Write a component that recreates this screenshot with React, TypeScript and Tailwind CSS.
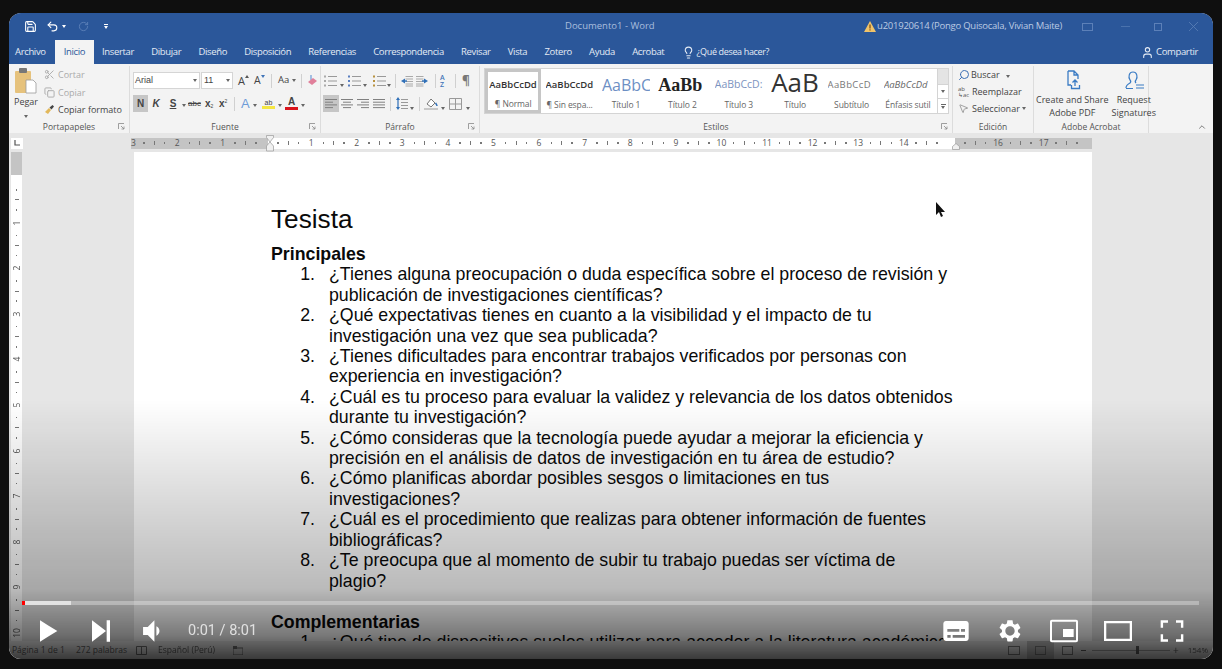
import React from "react";
import { Save, Undo2, RotateCw, Lightbulb, User, Search, Scissors, Copy, MousePointer2, ChevronUp } from "lucide-react";

const ui = { fontFamily: '"Open Sans", "Noto Sans", sans-serif' };

const Caret = ({ c = "border-t-[#666]" }: { c?: string }) => (
  <span className={`inline-block shrink-0 w-0 h-0 border-l-[2.5px] border-r-[2.5px] border-t-[3px] border-l-transparent border-r-transparent ${c}`} />
);

const Launcher = () => (
  <svg width="7" height="7" viewBox="0 0 7 7" className="text-[#888]">
    <path d="M0.5 6V0.5H6M3 3l3 3M6 3.5V6H3.5" fill="none" stroke="currentColor" strokeWidth="0.8" />
  </svg>
);

const Sep = ({ c }: { c: string }) => <span className={`w-px h-[14px] bg-[#d0d0d0] shrink-0 ${c}`} />;

const Group = ({ w, label, launcher, children }: { w: string; label: string; launcher?: boolean; children: React.ReactNode }) => (
  <div className={`${w} shrink-0 flex flex-col h-full border-r border-[#dcdcdc]`}>
    <div className="flex-1 min-h-0">{children}</div>
    <div className="h-[12px] shrink-0 flex items-center justify-center relative text-[8.5px] text-[#555] leading-none">
      {label}
      {launcher && (
        <span className="absolute right-[4px] top-[2px]">
          <Launcher />
        </span>
      )}
    </div>
  </div>
);

const Align = ({ kind }: { kind: "l" | "c" | "r" | "j" }) => {
  const rows = [1, 3.7, 6.4, 9.1];
  const widths = kind === "j" ? [12, 12, 12, 12] : [12, 8, 12, 8];
  return (
    <svg width="12" height="11" viewBox="0 0 12 11">
      {rows.map((y, i) => {
        const wd = widths[i];
        const x = kind === "c" ? (12 - wd) / 2 : kind === "r" ? 12 - wd : 0;
        return <rect key={y} x={x} y={y} width={wd} height="1" fill="#808080" />;
      })}
    </svg>
  );
};

const BulletList = ({ dot = "#555" }: { dot?: string }) => (
  <svg width="13" height="12" viewBox="0 0 13 12" className="shrink-0">
    {[1.5, 6, 10.5].map((y) => (
      <g key={y}>
        <rect x="0" y={y - 1} width="2" height="2" fill={dot} />
        <rect x="4" y={y - 0.5} width="9" height="1" fill="#999" />
      </g>
    ))}
  </svg>
);

const Indent = ({ flip }: { flip?: boolean }) => (
  <svg width="13" height="12" viewBox="0 0 13 12" className={`shrink-0 ${flip ? "-scale-x-100" : ""}`}>
    {[1, 3.5, 6, 8.5, 10.5].map((y) => (
      <rect key={y} x="5.5" y={y} width="7.5" height="1" fill="#aaa" />
    ))}
    <path d="M5 3.5L1 6l4 2.5z" fill="#2f6fb8" />
    <rect x="3.5" y="5.3" width="3.5" height="1.4" fill="#2f6fb8" />
  </svg>
);

const styles = [
  { a: "AaBbCcDd", l: "¶ Normal", cls: "text-[9.5px] text-[#333] font-semibold [font-family:'Open_Sans',sans-serif]", active: true },
  { a: "AaBbCcDd", l: "¶ Sin espa...", cls: "text-[9.5px] text-[#333] font-semibold [font-family:'Open_Sans',sans-serif]" },
  { a: "AaBbCc(", l: "Título 1", cls: "text-[16px] text-[#6d8fc4] [font-family:'Open_Sans',sans-serif]" },
  { a: "AaBb", l: "Título 2", cls: "text-[18px] text-[#222] font-bold [font-family:'Liberation_Serif',serif]" },
  { a: "AaBbCcD:", l: "Título 3", cls: "text-[10.5px] text-[#7c93c0] [font-family:'Open_Sans',sans-serif]" },
  { a: "AaB", l: "Título", cls: "text-[26px] text-[#333] leading-[18px] -translate-y-[3px] inline-block [font-family:'Open_Sans',sans-serif]" },
  { a: "AaBbCcD", l: "Subtítulo", cls: "text-[9.5px] text-[#777] tracking-[0.4px] [font-family:'Open_Sans',sans-serif]" },
  { a: "AaBbCcDd", l: "Énfasis sutil", cls: "text-[9.5px] text-[#666] italic [font-family:'Open_Sans',sans-serif]" },
];

const tabs = ["Insertar", "Dibujar", "Diseño", "Disposición", "Referencias", "Correspondencia", "Revisar", "Vista", "Zotero", "Ayuda", "Acrobat"];

const questions = [
  ["¿Tienes alguna preocupación o duda específica sobre el proceso de revisión y", "publicación de investigaciones científicas?"],
  ["¿Qué expectativas tienes en cuanto a la visibilidad y el impacto de tu", "investigación una vez que sea publicada?"],
  ["¿Tienes dificultades para encontrar trabajos verificados por personas con", "experiencia en investigación?"],
  ["¿Cuál es tu proceso para evaluar la validez y relevancia de los datos obtenidos", "durante tu investigación?"],
  ["¿Cómo consideras que la tecnología puede ayudar a mejorar la eficiencia y", "precisión en el análisis de datos de investigación en tu área de estudio?"],
  ["¿Cómo planificas abordar posibles sesgos o limitaciones en tus", "investigaciones?"],
  ["¿Cuál es el procedimiento que realizas para obtener información de fuentes", "bibliográficas?"],
  ["¿Te preocupa que al momento de subir tu trabajo puedas ser víctima de", "plagio?"],
];

const Seg = ({ n }: { n?: number }) => (
  <div className="w-[45.6px] shrink-0 flex items-center justify-between pl-[9px] text-[8.5px] leading-none text-[#555]">
    <span className="w-[1.5px] h-[1.5px] bg-[#777]" />
    <span className="w-[1px] h-[4px] bg-[#777]" />
    <span className="w-[1.5px] h-[1.5px] bg-[#777]" />
    <span className="w-[5px] flex justify-center">{n ?? ""}</span>
  </div>
);

const VSeg = ({ n }: { n: number }) => (
  <div className="h-[45.6px] shrink-0 flex flex-col items-center justify-between pt-[9px] text-[8.5px] leading-none text-[#555]">
    <span className="w-[1.5px] h-[1.5px] bg-[#777]" />
    <span className="w-[4px] h-[1px] bg-[#777]" />
    <span className="w-[1.5px] h-[1.5px] bg-[#777]" />
    <span className="h-[6px] w-[6px] flex items-center justify-center -rotate-90">{n}</span>
  </div>
);

const YtIcon = ({ children }: { children: React.ReactNode }) => (
  <svg width="48" height="48" viewBox="0 0 36 36" fill="#fff">
    {children}
  </svg>
);

const Btn = ({ children }: { children: React.ReactNode }) => (
  <div className="w-[52px] h-[48px] flex items-center justify-center shrink-0">{children}</div>
);
const RBtn = ({ children }: { children: React.ReactNode }) => (
  <div className="w-[54px] h-[48px] flex items-center justify-center shrink-0">{children}</div>
);

export default function App() {
  return (
    <div className="w-[1222px] h-[669px] bg-[#0f0f0f] pt-[13px] pl-[9px] overflow-hidden" style={ui}>
      <div className="relative w-[1204px] h-[646px] rounded-[12px] overflow-hidden bg-[#e6e6e6] flex flex-col">
        {/* Word app */}
        <div className="flex flex-col h-full blur-[0.5px]">
          {/* title bar */}
          <div className="h-[27px] shrink-0 bg-[#2b579a] flex items-center text-[10px] text-[#a9bedd]">
            <div className="flex items-center pl-[15px] gap-[9px] w-[300px]">
              <Save size={13} className="text-white" />
              <span className="flex items-center gap-[3px]">
                <Undo2 size={13} className="text-white" />
                <Caret c="border-t-white" />
              </span>
              <RotateCw size={11} className="text-[#5c80b8] ml-[3px]" />
              <span className="ml-[6px] flex flex-col items-center gap-[1px]">
                <span className="w-[4px] h-[1px] bg-white" />
                <Caret c="border-t-white" />
              </span>
            </div>
            <div className="pl-[256px] whitespace-nowrap text-[9.5px]">Documento1 - Word</div>
            <div className="ml-auto flex items-center pr-[15px]">
              <svg width="12" height="11" viewBox="0 0 12 11" className="mr-[1px]">
                <path d="M6 0L12 11H0Z" fill="#f0c36a" />
                <rect x="5.4" y="3.5" width="1.2" height="4" fill="#7a4a10" />
                <rect x="5.4" y="8.3" width="1.2" height="1.2" fill="#7a4a10" />
              </svg>
              <span className="text-[9.5px] text-[#bccbe3] whitespace-nowrap mr-[20px] tracking-[-0.25px]">u201920614 (Pongo Quisocala, Vivian Maite)</span>
              <span className="w-[11px] h-[8px] border border-[#5c80b8] mr-[28px]" />
              <span className="w-[9px] h-[1px] bg-[#4a72ad] mr-[24px]" />
              <span className="w-[8px] h-[8px] border border-[#5c80b8] mr-[27px]" />
              <svg width="9" height="9" viewBox="0 0 9 9"><path d="M0 0l9 9M9 0L0 9" stroke="#5c80b8" strokeWidth="0.8" /></svg>
            </div>
          </div>
          {/* tabs */}
          <div className="h-[24px] shrink-0 bg-[#2b579a] flex items-end text-[9.5px] text-[#e4ebf5] tracking-[-0.35px]">
            <div className="w-[46px] pl-[6px] h-[24px] flex items-center whitespace-nowrap">Archivo</div>
            <div className="w-[39px] h-[24px] bg-[#f3f3f3] text-[#2b579a] flex items-center justify-center">Inicio</div>
            <div className="flex items-center h-[24px] gap-[17.2px] pl-[8px] whitespace-nowrap">
              {tabs.map((t) => (
                <span key={t}>{t}</span>
              ))}
              <span className="flex items-center gap-[2px] text-[9px]">
                <Lightbulb size={13} />
                ¿Qué desea hacer?
              </span>
            </div>
            <div className="ml-auto h-[24px] flex items-center pr-[15px] gap-[2px] text-[9.5px]">
              <User size={13} />
              Compartir
            </div>
          </div>
          {/* ribbon */}
          <div className="h-[69px] shrink-0 bg-[#f3f3f3] flex items-stretch text-[#444] pt-[2px]">
            <Group w="w-[121px]" label="Portapapeles" launcher>
              <div className="flex h-full">
                <div className="w-[34px] flex flex-col items-center text-[9px] leading-none pt-[1px]">
                  <svg width="24" height="28" viewBox="0 0 24 28">
                    <rect x="1" y="4" width="16" height="22" rx="1" fill="#e6c27c" />
                    <rect x="5" y="1" width="8" height="5" rx="1" fill="#777" />
                    <path d="M12 13h7l3 3v10H12z" fill="#fff" stroke="#999" strokeWidth="0.8" />
                  </svg>
                  <span className="mt-[2px]">Pegar</span>
                  <span className="mt-[4px]"><Caret /></span>
                </div>
                <div className="flex flex-col text-[9px] gap-[0px] leading-[17.5px] pl-[1px]">
                  <span className="flex items-center gap-[3px] text-[#aaa]"><Scissors size={11} />Cortar</span>
                  <span className="flex items-center gap-[3px] text-[#aaa]"><Copy size={11} />Copiar</span>
                  <span className="flex items-center gap-[3px] text-[#444] whitespace-nowrap">
                    <svg width="11" height="11" viewBox="0 0 11 11"><path d="M1 8l4-4 2 2-3 4z" fill="#e2b85a" /><path d="M5.5 3.5L8.5 1l1.5 1.5-2.5 3z" fill="#444" /></svg>
                    Copiar formato
                  </span>
                </div>
              </div>
            </Group>
            <Group w="w-[191px]" label="Fuente" launcher>
              <div className="pl-[3px] pt-[6px] flex flex-col gap-[6px]">
                <div className="flex items-center h-[17px] text-[9px]">
                  <div className="w-[67px] h-[17px] shrink-0 bg-white border border-[#d5d5d5] flex items-center justify-between px-[1px] pr-[2px] [font-family:'Liberation_Sans',sans-serif]">Arial<Caret /></div>
                  <div className="w-[32px] h-[17px] shrink-0 ml-px bg-white border border-[#d5d5d5] flex items-center justify-between pl-[2px] pr-[2px] [font-family:'Liberation_Sans',sans-serif]">11<Caret /></div>
                  <span className="ml-[5px] w-[10px] text-[11px] leading-none flex items-start">A<svg width="4" height="3" viewBox="0 0 4 3" className="shrink-0"><path d="M2 0l2 3H0z" fill="#555" /></svg></span>
                  <span className="ml-[6px] w-[10px] text-[10.5px] leading-none flex items-start">A<svg width="4" height="3" viewBox="0 0 4 3" className="shrink-0"><path d="M0 0h4L2 3z" fill="#3f74b8" /></svg></span>
                  <Sep c="ml-[7px]" />
                  <span className="ml-[6px] flex items-center gap-[3px] text-[9.5px]">Aa<Caret /></span>
                  <Sep c="ml-[5px]" />
                  <span className="ml-[4px]">
                    <svg width="13" height="13" viewBox="0 0 13 13"><path d="M5 1v5" stroke="#6d9bd8" strokeWidth="1.2" /><path d="M2 8l5-4 4 3-5 4z" fill="#e07f9a" /></svg>
                  </span>
                </div>
                <div className="flex items-center h-[17px] text-[10px] font-bold [font-family:'Liberation_Sans',sans-serif] text-[#444]">
                  <span className="w-[15px] h-[17px] shrink-0 bg-[#c6c6c6] flex items-center justify-center">N</span>
                  <span className="w-[8px] ml-[4px] text-center italic">K</span>
                  <span className="w-[8px] ml-[9px] text-center underline">S</span>
                  <span className="ml-[5px]"><Caret /></span>
                  <span className="ml-[2px] w-[14px] line-through font-normal text-[8px]">abc</span>
                  <span className="ml-[3px] w-[9px] leading-none flex items-end">x<span className="text-[5px] font-normal">2</span></span>
                  <span className="ml-[5px] w-[9px] leading-none flex items-start">x<span className="text-[5px] font-normal">2</span></span>
                  <Sep c="ml-[6px]" />
                  <span className="ml-[6px] w-[10px] text-[#6d9bd8] text-[13px] font-normal leading-none">A</span>
                  <span className="ml-[2px]"><Caret /></span>
                  <span className="ml-[5px] w-[13px] flex flex-col items-center leading-none text-[7px] font-normal">ab<span className="w-[13px] h-[3px] bg-[#f5e642]" /></span>
                  <span className="ml-[3px]"><Caret /></span>
                  <span className="ml-[3px] w-[13px] flex flex-col items-center leading-none text-[10px]">A<span className="w-[13px] h-[3px] bg-[#d9141c]" /></span>
                  <span className="ml-[3px]"><Caret /></span>
                </div>
              </div>
            </Group>
            <Group w="w-[159px]" label="Párrafo" launcher>
              <div className="pt-[6px] flex flex-col gap-[6px]">
                <div className="flex items-center h-[17px]">
                  <span className="ml-[3px]"><BulletList dot="#aaa" /></span>
                  <span className="ml-[3px]"><Caret /></span>
                  <span className="ml-[4px]"><BulletList dot="#5a7fc0" /></span>
                  <span className="ml-[2px]"><Caret /></span>
                  <span className="ml-[6px]"><BulletList dot="#b8913f" /></span>
                  <span className="ml-[1px]"><Caret /></span>
                  <Sep c="ml-[4px]" />
                  <span className="ml-[4px]"><Indent /></span>
                  <span className="ml-[3px]"><Indent flip /></span>
                  <Sep c="ml-[6px]" />
                  <span className="ml-[4px] w-[11px] text-[7px] leading-[7px] text-[#3f74b8] font-semibold">A<br />Z</span>
                  <Sep c="ml-[4px]" />
                  <span className="ml-[6px] text-[12px] text-[#777] font-bold leading-none">¶</span>
                </div>
                <div className="flex items-center h-[17px]">
                  <span className="ml-[2px] w-[16px] h-[17px] bg-[#c6c6c6] flex items-center justify-center"><Align kind="l" /></span>
                  <span className="w-[16px] flex justify-center"><Align kind="c" /></span>
                  <span className="w-[16px] flex justify-center"><Align kind="r" /></span>
                  <span className="w-[16px] flex justify-center"><Align kind="j" /></span>
                  <Sep c="ml-[3px]" />
                  <svg width="12" height="13" viewBox="0 0 12 13" className="ml-[5px]"><path d="M2 0l2 3H0zM2 13l2-3H0zM1.4 3h1.2v7H1.4z" fill="#2f6fb8" /><path d="M5 2h7v1H5zM5 5h7v1H5zM5 8h7v1H5zM5 11h7v1H5z" fill="#999" /></svg>
                  <span className="ml-[2px]"><Caret /></span>
                  <Sep c="ml-[5px]" />
                  <svg width="15" height="13" viewBox="0 0 15 13" className="ml-[4px]"><path d="M3 7l4-5 4 4-4 4z" fill="#fff" stroke="#777" /><path d="M11.5 6c1 1.5 1.5 2 1.5 3" stroke="#2f6fb8" strokeWidth="1.4" fill="none" /><rect x="0" y="11" width="14" height="2" fill="#c8c8c8" /></svg>
                  <span className="ml-[2px]"><Caret /></span>
                  <svg width="13" height="12" viewBox="0 0 13 12" className="ml-[4px]"><path d="M.5.5h12v11H.5zM6.5.5v11M.5 6h12" fill="none" stroke="#999" /></svg>
                  <span className="ml-[4px]"><Caret /></span>
                </div>
              </div>
            </Group>
            <Group w="w-[473px]" label="Estilos" launcher>
              <div className="pl-[4px] pt-[2px] flex">
                <div className="w-[454px] h-[46px] flex bg-white border border-[#d4d4d4] shrink-0">
                  {styles.map((s) => (
                    <div key={s.l} className={`w-[56.4px] shrink-0 h-full flex flex-col items-center justify-between overflow-hidden ${s.active ? "border-[3px] border-[#c6c6c6] pt-[2px]" : "pt-[5px] pb-[1px]"}`}>
                      <div className="w-[48px] h-[22px] flex items-center overflow-hidden">
                        <span className={`whitespace-nowrap ${s.cls}`}>{s.a}</span>
                      </div>
                      <div className={`text-[8.5px] text-[#666] whitespace-nowrap leading-[14px] tracking-[-0.1px] ${s.active ? "translate-y-[1px]" : ""}`}>{s.l}</div>
                    </div>
                  ))}
                </div>
                <div className="w-[11px] h-[46px] flex flex-col border border-l-0 border-[#d4d4d4] items-center text-[#777]">
                  <span className="h-[15px] w-full bg-[#e4e4e4]" />
                  <span className="h-[15px] flex items-center border-y border-[#d4d4d4] w-full justify-center bg-white"><Caret /></span>
                  <span className="h-[14px] flex flex-col items-center justify-center gap-[1px] w-full bg-white"><span className="w-[5px] h-px bg-[#666]" /><Caret /></span>
                </div>
              </div>
            </Group>
            <Group w="w-[81px]" label="Edición">
              <div className="pl-[5px] flex flex-col text-[9px] leading-[17px] whitespace-nowrap">
                <span className="flex items-center gap-[1px]"><Search size={12} className="text-[#3b6fb5] -scale-x-100" />Buscar<span className="ml-[5px]"><Caret /></span></span>
                <span className="flex items-center gap-[2px]"><span className="text-[6px] leading-[6px] text-[#555] w-[12px]">ab<br />↳ac</span>Reemplazar</span>
                <span className="flex items-center gap-[2px]"><MousePointer2 size={11} className="text-[#999] mr-[1px]" />Seleccionar<Caret /></span>
              </div>
            </Group>
            <Group w="w-[115px]" label="Adobe Acrobat">
              <div className="flex text-[9px] leading-[13px] text-center pt-[4px] pl-[2px] gap-[3px] whitespace-nowrap">
                <div className="flex flex-col items-center">
                  <svg width="17" height="20" viewBox="0 0 17 20" className="mb-[3px] translate-x-[2px]"><path d="M2 1h6l4 4v4M8 1v4h4M2 1v14h3M9 10v6M6.5 12.5L9 10l2.5 2.5M5.5 15v3.5h8V15" fill="none" stroke="#3b7cc4" strokeWidth="1.3" /></svg>
                  Create and Share<br />Adobe PDF
                </div>
                <div className="flex flex-col items-center">
                  <svg width="22" height="20" viewBox="0 0 22 20" className="mb-[3px]"><path d="M3 18c0-3 2-4 4-5 1-1 1-2 0-3-2-3-1-8 3-8s5 5 3 8c-1 1-1 2 0 3" fill="none" stroke="#3b7cc4" strokeWidth="1.2" /><path d="M3 18.5h7M13 15h8M13 18h8" stroke="#3b7cc4" strokeWidth="1.2" /></svg>
                  Request<br />Signatures
                </div>
              </div>
            </Group>
            <div className="flex-1 flex items-end justify-end pr-[6px] pb-[1px]"><ChevronUp size={10} className="text-[#666]" /></div>
          </div>
          {/* ruler row */}
          <div className="h-[19px] shrink-0 flex items-center relative bg-[#e6e6e6]">
            <div className="w-[12px] h-[11px] bg-white ml-[2px] mr-[108px] mt-[1px] flex items-center justify-center">
              <svg width="6" height="6" viewBox="0 0 6 6"><path d="M1 0v5h5" fill="none" stroke="#555" strokeWidth="1.2" /></svg>
            </div>
            <div className="h-[11px] w-[137px] bg-[#c4c4c4] flex items-center mt-[1px] text-[8.5px] leading-none text-[#555]">
              <span className="w-[3px]">3</span>
              <Seg n={2} /><Seg n={1} /><Seg />
            </div>
            <div className="h-[11px] w-[687px] bg-white flex items-center mt-[1px] overflow-hidden">
              {Array.from({ length: 14 }).map((_, i) => <Seg key={i} n={i + 1} />)}
              <Seg />
            </div>
            <div className="h-[11px] w-[137px] bg-[#c4c4c4] flex items-center mt-[1px] overflow-hidden">
              <Seg n={16} /><Seg n={17} /><Seg />
            </div>
            <svg width="8" height="17" viewBox="0 0 8 17" className="absolute left-[257px] top-[2px]"><path d="M0.5 0.5h7v2L4 7 0.5 2.5zM4 7l3.5 4v5h-7v-5z" fill="#f0f0f0" stroke="#999" strokeWidth="0.7" /></svg>
            <svg width="8" height="7" viewBox="0 0 8 7" className="absolute left-[943px] top-[10px]"><path d="M4 0.5L7.5 3.5v3h-7v-3z" fill="#f0f0f0" stroke="#999" strokeWidth="0.7" /></svg>
          </div>
          {/* workspace */}
          <div className="flex-1 min-h-0 flex overflow-hidden">
            <div className="w-[125px] shrink-0 flex">
              <div className="ml-[2px] w-[11px] h-full flex flex-col items-center overflow-hidden bg-white">
                <div className="h-[23px] shrink-0 w-full bg-[#c4c4c4]" />
                <div className="mt-[5px]">
                  {Array.from({ length: 10 }).map((_, i) => <VSeg key={i} n={i + 1} />)}
                </div>
              </div>
            </div>
            <div className="w-[958px] h-full shrink-0 bg-white relative pl-[137px] pt-[52px] text-[#0a0a0a] leading-[20.4px] text-[17.75px] [font-family:'Liberation_Sans',Arial,sans-serif] whitespace-nowrap overflow-hidden">
              <div className="text-[26.2px] leading-[30px] mb-[10px]">Tesista</div>
              <div className="font-bold">Principales</div>
              {questions.map((q, i) => (
                <div key={i} className="flex">
                  <span className="w-[44px] text-right shrink-0">{i + 1}.</span>
                  <span className="pl-[14px]">{q[0]}<br />{q[1]}</span>
                </div>
              ))}
              <div className="font-bold mt-[21px]">Complementarias</div>
              <div className="flex">
                <span className="w-[44px] text-right shrink-0">1.</span>
                <span className="pl-[14px]">¿Qué tipo de dispositivos suelos utilizar para acceder a la literatura académica</span>
              </div>
              <svg width="10" height="16" viewBox="0 0 10 16" className="absolute left-[801px] top-[50px]"><path d="M1 0v13l3-3 2 5 2-1-2-4h4z" fill="#111" /></svg>
            </div>
            <div className="flex-1" />
          </div>
          {/* status */}
          <div className="h-[18px] shrink-0 bg-[#f1f1f1] flex items-center text-[8.5px] text-[#666] whitespace-nowrap">
            <span className="ml-[3px] w-[64px]">Página 1 de 1</span>
            <span className="w-[60px]">272 palabras</span>
            <svg width="11" height="9" viewBox="0 0 11 9" className="mr-[11px]"><path d="M.5.5h10v8H.5zM5.5.5v8" fill="none" stroke="#777" /></svg>
            <span className="w-[75px]">Español (Perú)</span>
            <svg width="10" height="9" viewBox="0 0 10 9"><rect y="2" width="10" height="7" fill="none" stroke="#777" /><rect width="4" height="3" fill="#777" /></svg>
            <div className="ml-auto flex items-center pr-[5px]">
              <span className="w-[12px] h-[9px] border border-[#888] mr-[7px]" />
              <span className="w-[27px] h-[18px] bg-[#c8c8c8] flex items-center justify-center"><span className="w-[11px] h-[9px] border border-[#888]" /></span>
              <span className="w-[11px] h-[9px] border border-[#888] mx-[8px]" />
              <span className="w-[5px] h-px bg-[#666]" />
              <span className="w-[78px] h-px bg-[#aaa] ml-[6px] flex justify-start pl-[44px]"><span className="w-[3px] h-[8px] bg-[#666] -mt-[4px]" /></span>
              <span className="ml-[3px] text-[10px] leading-none">+</span>
              <span className="ml-[9px] text-[8px]">154%</span>
            </div>
          </div>
        </div>

        {/* Player gradient */}
        <div className="absolute inset-x-0 bottom-0 h-[259px] pointer-events-none bg-[linear-gradient(to_bottom,rgba(0,0,0,0)_0%,rgba(0,0,0,0.27)_73%,rgba(0,0,0,0.53)_91%,rgba(0,0,0,0.76)_100%)]" />

        {/* Player controls */}
        <div className="absolute left-[13px] right-[14px] bottom-0 h-[58px] text-white">
          <div className="h-[4px] w-full bg-white/30 flex">
            <div className="w-[3px] h-full bg-[#ff0000]" />
            <div className="w-[46px] h-full bg-white/60" />
          </div>
          <div className="flex items-center h-[48px] mt-[2px] [font-family:'Roboto',sans-serif]">
            <Btn>
              <YtIcon><path d="M12,26 18.5,22 18.5,14 12,10 z M18.5,22 25,18 25,18 18.5,14 z" /></YtIcon>
            </Btn>
            <Btn>
              <YtIcon><path d="M12,26 L22.5,18 L12,10 Z M23,10 H25.5 V26 H23 Z" /></YtIcon>
            </Btn>
            <Btn>
              <YtIcon><path d="M11.3,21 L14.8,21 L19.8,26 L19.8,10 L14.8,15 L11.3,15 Z M21.3,14.5 L21.3,21.5 C22.6,20.9 23.6,19.6 23.6,18 C23.6,16.4 22.6,15.1 21.3,14.5 Z" /></YtIcon>
            </Btn>
            <span className="ml-[10px] text-[14.5px] text-white/75 whitespace-nowrap leading-none">0:01 / 8:01</span>
            <div className="ml-auto flex items-center">
              <RBtn>
                <YtIcon><path fillRule="evenodd" d="M10.5,10.5 H25.5 C26.6,10.5 27.5,11.4 27.5,12.5 V23.5 C27.5,24.6 26.6,25.5 25.5,25.5 H10.5 C9.4,25.5 8.5,24.6 8.5,23.5 V12.5 C8.5,11.4 9.4,10.5 10.5,10.5 Z M11.5,16.5 V18.5 H20.5 V16.5 Z M21.75,16.5 V18.5 H24.75 V16.5 Z M11.5,21 V23 H14 V21 Z M15.5,21 V23 H24.75 V21 Z" /></YtIcon>
              </RBtn>
              <RBtn>
                <YtIcon><path fillRule="evenodd" d="m23.94,18.78 c.03,-0.25 .05,-0.51 .05,-0.78 0,-0.27 -0.02,-0.52 -0.05,-0.78 l1.68,-1.32 c.15,-0.12 .19,-0.33 .09,-0.51 l-1.6,-2.76 c-0.09,-0.17 -0.31,-0.24 -0.48,-0.17 l-1.99,.8 c-0.41,-0.32 -0.86,-0.58 -1.35,-0.78 L19.96,10.3 C19.93,10.11 19.76,9.97 19.57,9.97 h-3.2 c-0.2,0 -0.36,.14 -0.39,.33 L15.67,12.42 c-0.49,.2 -0.94,.47 -1.35,.78 l-1.99,-0.8 c-0.18,-0.07 -0.39,0 -0.48,.17 l-1.6,2.76 c-0.1,.17 -0.05,.39 .09,.51 l1.68,1.32 c-0.03,.25 -0.05,.52 -0.05,.78 0,.26 .02,.52 .05,.78 l-1.68,1.32 c-0.15,.12 -0.19,.33 -0.09,.51 l1.6,2.76 c.09,.17 .31,.24 .48,.17 l1.99,-0.8 c.41,.32 .86,.58 1.35,.78 l.3,2.12 c.04,.19 .2,.33 .39,.33 h3.2 c.2,0 .36,-0.14 .39,-0.33 l.3,-2.12 c.49,-0.2 .94,-0.47 1.35,-0.78 l1.99,.8 c.18,.07 .39,0 .48,-0.17 l1.6,-2.76 c.09,-0.17 .05,-0.39 -0.09,-0.51 l-1.68,-1.32 z M18,21.5 c-1.93,0 -3.5,-1.57 -3.5,-3.5 0,-1.93 1.57,-3.5 3.5,-3.5 1.93,0 3.5,1.57 3.5,3.5 0,1.93 -1.57,3.5 -3.5,3.5 z" /></YtIcon>
              </RBtn>
              <RBtn>
                <YtIcon><path fillRule="evenodd" d="M9,9.5 H27 C28,9.5 28.5,10 28.5,11 V25 C28.5,26 28,26.5 27,26.5 H9 C8,26.5 7.5,26 7.5,25 V11 C7.5,10 8,9.5 9,9.5 Z M9,11 V25 H27 V11 Z" /><rect x="17.25" y="16.5" width="8" height="6" /></YtIcon>
              </RBtn>
              <RBtn>
                <YtIcon><path fillRule="evenodd" d="M7.5,10.5 H28.5 V25.5 H7.5 Z M9.2,12.2 V23.8 H26.8 V12.2 Z" /></YtIcon>
              </RBtn>
              <RBtn>
                <YtIcon><path d="M9.5,10 h5.5 v1.8 H11.3 v3.7 h-1.8 z M21,10 H26.5 v5.5 h-1.8 V11.8 H21 z M24.7,20.5 h1.8 V26 H21 v-1.8 h3.7 z M9.5,20.5 h1.8 V24.2 H15 V26 H9.5 z" /></YtIcon>
              </RBtn>
            </div>
          </div>
        </div>
      </div>
    </div>
  );
}
